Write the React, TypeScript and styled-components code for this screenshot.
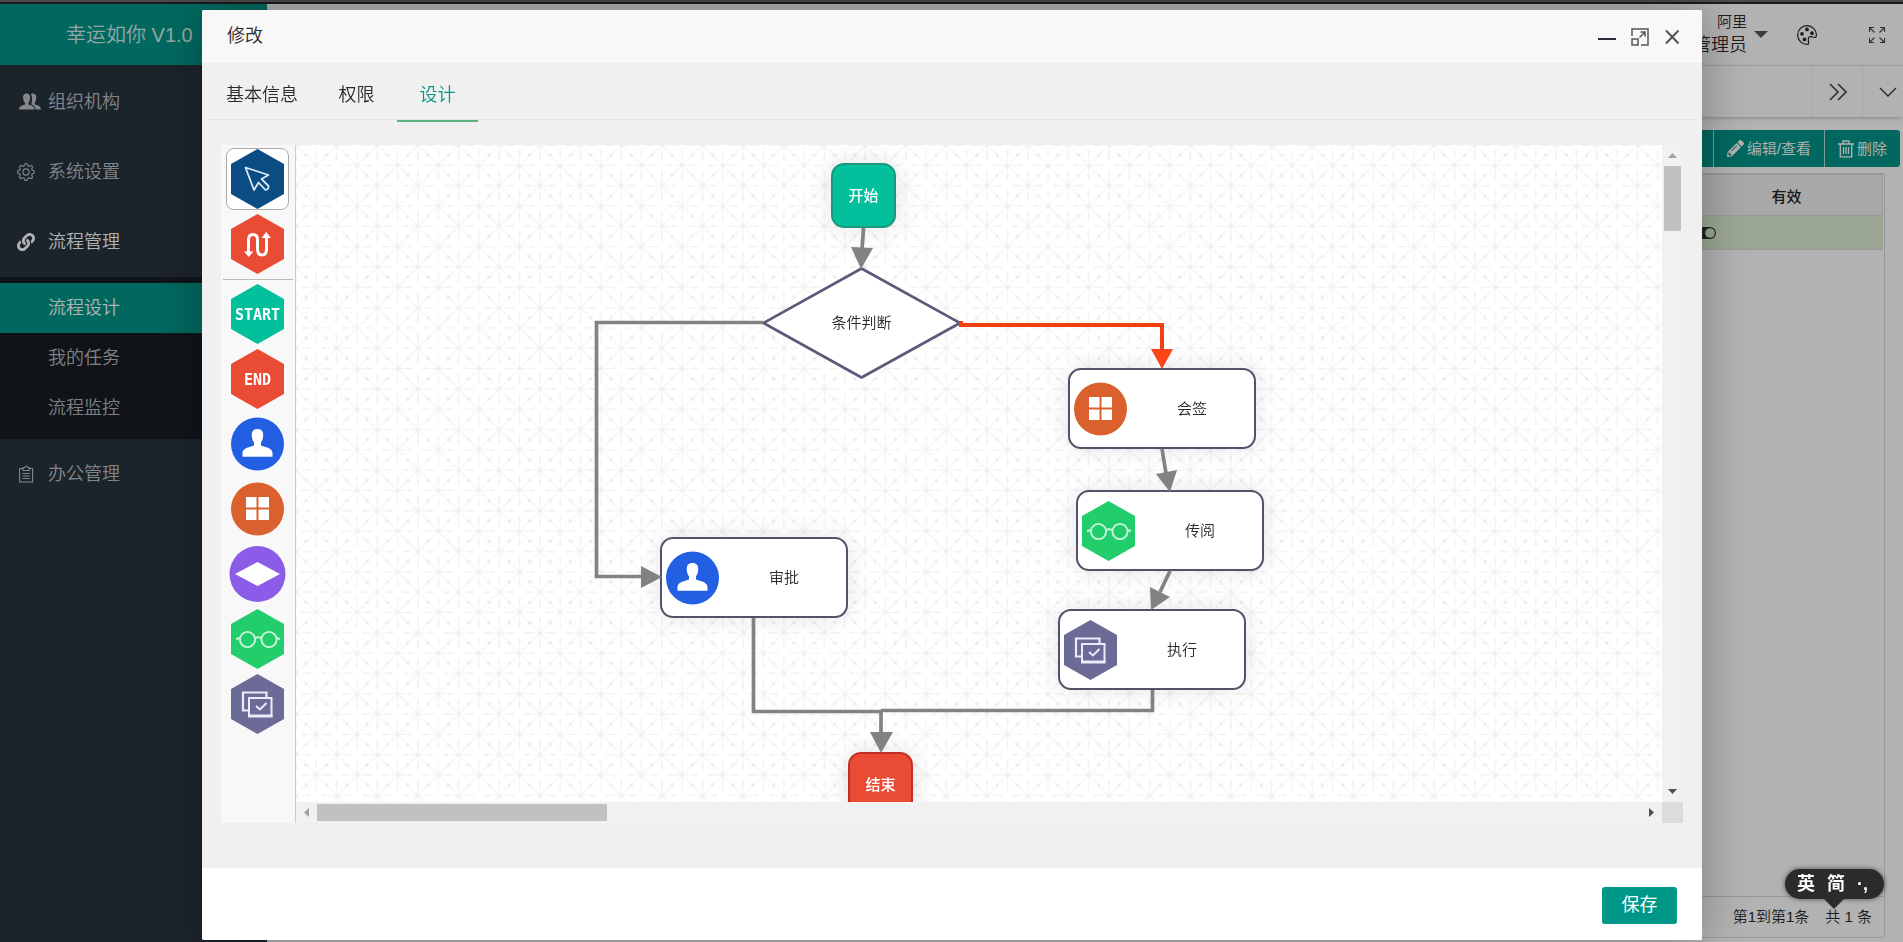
import React from 'react';
import styled, { createGlobalStyle, css } from 'styled-components';
import { BsGear, BsPalette } from 'react-icons/bs';
import { FaLink, FaPencilAlt } from 'react-icons/fa';

const GlobalStyle = createGlobalStyle`
  * { box-sizing: border-box; }
  html, body, #root { height: 100%; }
  body {
    margin: 0;
    overflow: hidden;
    background: #fff;
    color: #2a2a2a;
    font: 350 15px/20px "Liberation Sans", "Noto Sans CJK SC", sans-serif;
  }
  button {
    margin: 0;
    padding: 0;
    border: 0;
    background: none;
    color: inherit;
    font: inherit;
    cursor: pointer;
  }
  a { color: inherit; text-decoration: none; }
  svg { display: block; flex: none; }
`;

/* ---------- application shell ---------- */

const Shell = styled.div`
  display: flex;
  flex-direction: column;
  height: 100%;
`;

const BrowserEdge = styled.div`
  flex: none;
  height: 4px;
  background: #6a6a6c;
  border-bottom: 2px solid #27272a;
`;

const Columns = styled.div`
  flex: 1;
  display: flex;
  min-height: 0;
`;

const Sidebar = styled.aside`
  flex: none;
  width: 267px;
  background: #28333e;
  color: rgba(255, 255, 255, 0.7);
  font-size: 18px;
`;

const Logo = styled.div`
  height: 61px;
  margin-bottom: 2px;
  padding-left: 66px;
  background: #009688;
  color: rgba(255, 255, 255, 0.85);
  font-size: 20px;
  line-height: 63px;
`;

const MenuItem = styled.a<{ $open?: boolean }>`
  display: flex;
  align-items: center;
  height: 70px;
  padding-left: 17px;
  color: ${p => (p.$open ? '#fff' : 'inherit')};
`;

const MenuIcon = styled.span`
  flex: none;
  width: 31px;
`;

const SubMenu = styled.nav`
  padding: 6px 0;
  background: rgba(0, 0, 0, 0.4);
`;

const SubItem = styled.a<{ $active?: boolean }>`
  display: block;
  padding-left: 48px;
  line-height: 50px;
  ${p => p.$active && css`
    background: #009688;
    color: #fff;
  `}
`;

const Main = styled.main`
  flex: 1;
  min-width: 0;
  display: flex;
  flex-direction: column;
`;

const TopBar = styled.header`
  flex: none;
  display: flex;
  justify-content: flex-end;
  align-items: center;
  height: 62px;
  padding-right: 17px;
  border-bottom: 1px solid #f0f0f0;
`;

const UserMenu = styled.button`
  display: flex;
  align-items: center;
  gap: 7px;
  margin-right: 29px;
`;

const UserName = styled.span`
  display: flex;
  flex-direction: column;
  align-items: flex-end;
  gap: 3px;
  padding-bottom: 3px;
`;

const Role = styled.span`
  font-size: 18px;
`;

const IconButton = styled.button`
  display: flex;
  align-items: center;
  justify-content: center;
`;

const Palette = styled(IconButton)`
  margin-right: 51px;
`;

const TabStrip = styled.div`
  flex: none;
  display: flex;
  justify-content: flex-end;
  height: 51px;
  box-shadow: 0 1px 4px rgba(0, 0, 0, 0.25);
`;

const StripButton = styled(IconButton)`
  width: 50px;
  border-left: 1px solid #f0f0f0;
`;

const LastStripButton = styled(StripButton)`
  width: 41px;
  padding-left: 10px;
`;

const Page = styled.section`
  flex: 1;
  display: flex;
  flex-direction: column;
  align-items: stretch;
  min-height: 0;
  padding: 13px 3px 4px 15px;
`;

const ActionGroup = styled.div`
  display: flex;
  align-self: flex-end;
  overflow: hidden;
  border-radius: 3px;
`;

const Action = styled.button`
  display: flex;
  align-items: center;
  gap: 3px;
  height: 37px;
  padding: 0 13px;
  background: #009688;
  color: #fff;
  & + & { border-left: 1px solid rgba(255, 255, 255, 0.7); }
`;

const GridBox = styled.div`
  flex: 1;
  display: flex;
  flex-direction: column;
  margin: 6px 15px 0 0;
  border: 1px solid #dcdcdc;
  border-radius: 2px;
`;

const Grid = styled.table`
  width: calc(100% - 1px);
  border-collapse: collapse;
  table-layout: fixed;
`;

const HeadCell = styled.th`
  height: 41px;
  padding: 4px 4px 0 0;
  border: 1px solid #dcdcdc;
  background: #f2f2f2;
  font-weight: 500;
  color: #222;
`;

const Cell = styled.td`
  height: 34px;
  padding: 0 0 0 1px;
  border-bottom: 1px solid #dcdcdc;
  background: #dff0d3;
`;

const Pager = styled.div`
  display: flex;
  justify-content: flex-end;
  align-items: center;
  gap: 16px;
  height: 41px;
  margin-top: auto;
  padding-right: 12px;
  border-top: 1px solid #d8d8d8;
`;

/* ---------- dialog ---------- */

const Mask = styled.div`
  position: fixed;
  inset: 0;
  display: flex;
  padding: 10px 201px 2px 202px;
  background: rgba(0, 0, 0, 0.3);
`;

const Dialog = styled.div`
  flex: 1;
  display: flex;
  flex-direction: column;
  min-width: 0;
  overflow: hidden;
  border-radius: 2px;
  background: #f0f0f0;
  box-shadow: 1px 1px 50px rgba(0, 0, 0, 0.3);
`;

const DialogHeader = styled.header`
  flex: none;
  display: flex;
  align-items: center;
  gap: 15px;
  height: 54px;
  padding: 1px 22px 0 25px;
  border-bottom: 1px solid #eee;
  background: #f8f8f8;
`;

const DialogTitle = styled.h1`
  flex: 1;
  margin: 0 0 3px;
  font-size: 18px;
  font-weight: 350;
`;

const DialogTabs = styled.div`
  flex: none;
  display: flex;
  height: 56px;
  margin: 0 6px;
  border-bottom: 1px solid #e2e2e2;
`;

const DialogTab = styled.button<{ $active?: boolean }>`
  min-width: 81px;
  height: 58px;
  padding: 6px 18px 0;
  border-bottom: 2px solid ${p => (p.$active ? '#5fb27e' : 'transparent')};
  color: ${p => (p.$active ? '#009688' : 'inherit')};
  font-size: 18px;
`;

const Workspace = styled.div`
  flex: 1;
  display: flex;
  min-height: 0;
  margin: 25px 19px 45px 19px;
`;

const Tools = styled.div`
  flex: none;
  display: flex;
  flex-direction: column;
  align-items: center;
  gap: 3px;
  width: 75px;
  padding: 3px 1px 0 0;
  border-right: 1px solid #ccc;
  background: #f8f8f8;
`;

const Tool = styled.button<{ $selected?: boolean }>`
  flex: none;
  display: flex;
  align-items: center;
  justify-content: center;
  width: 63px;
  height: 62px;
  border: 1px solid ${p => (p.$selected ? '#aaa' : 'transparent')};
  border-radius: 8px;
  background: ${p => (p.$selected ? '#fff' : 'none')};
`;

const Divider = styled.hr`
  flex: none;
  align-self: stretch;
  height: 1px;
  margin: 1px 1px 0 2px;
  border: 0;
  background: #bbb;
`;

const Viewport = styled.div`
  flex: 1;
  display: grid;
  grid-template: minmax(0, 1fr) 21px / minmax(0, 1fr) 21px;
  min-width: 0;
`;

const Canvas = styled.div`
  position: relative;
  overflow: hidden;
  background: #fff;
`;

const Layer = styled.svg`
  position: absolute;
  inset: 0;
  width: 100%;
  height: 100%;
`;

const ScrollTrack = styled.div<{ $vertical?: boolean }>`
  display: flex;
  flex-direction: ${p => (p.$vertical ? 'column' : 'row')};
  align-items: center;
  background: #f1f1f1;
`;

const ScrollButton = styled(IconButton)`
  width: 21px;
  height: 21px;
  color: #505050;
  &:disabled { color: #a3a3a3; }
`;

const Thumb = styled.div<{ $w: string; $h: string }>`
  width: ${p => p.$w};
  height: ${p => p.$h};
  background: #c1c1c1;
`;

const Spacer = styled.div`
  flex: 1;
`;

const Corner = styled.div`
  background: #dcdcdc;
`;

interface Place { $x: number; $y: number }

const Node = styled.div<Place>`
  position: absolute;
  left: ${p => p.$x}px;
  top: ${p => p.$y}px;
  display: flex;
  align-items: center;
  width: 188px;
  height: 81px;
  padding-left: 4px;
  border: 2px solid #555168;
  border-radius: 13px;
  background: #fff;
  box-shadow: 0 0 24px rgba(0, 0, 0, 0.1);
`;

const NodeText = styled.span`
  flex: 1;
  padding-left: 3px;
  text-align: center;
`;

const Terminal = styled.div<Place & { $end?: boolean }>`
  position: absolute;
  left: ${p => p.$x}px;
  top: ${p => p.$y}px;
  width: 65px;
  height: 65px;
  border: 2px solid ${p => (p.$end ? '#bf2f24' : '#17987f')};
  border-radius: 13px;
  background: ${p => (p.$end ? '#ea4b35' : '#02c09c')};
  box-shadow: 0 0 24px rgba(0, 0, 0, 0.12);
  color: #fff;
  font-weight: 500;
  line-height: 61px;
  text-align: center;
`;

const Decision = styled.div<Place>`
  position: absolute;
  left: ${p => p.$x}px;
  top: ${p => p.$y}px;
  display: grid;
  place-items: center;
  width: 199px;
  height: 112px;
  & > * { grid-area: 1 / 1; }
`;

const DialogFooter = styled.footer`
  flex: none;
  display: flex;
  justify-content: flex-end;
  align-items: center;
  height: 72px;
  padding: 2px 25px 0 0;
  background: #fff;
`;

const SaveButton = styled.button`
  width: 75px;
  height: 37px;
  border-radius: 3px;
  background: #009688;
  color: #fff;
  font-size: 18px;
  font-weight: 400;
`;

/* ---------- input method bubble ---------- */

const Ime = styled.div`
  position: fixed;
  right: 19px;
  bottom: 43px;
  display: flex;
  align-items: center;
  gap: 12px;
  width: 99px;
  height: 30px;
  padding-left: 12px;
  border-radius: 15px;
  background: #2b2b2b;
  box-shadow: 0 0 5px rgba(0, 0, 0, 0.6);
  color: #fff;
  font-size: 18px;
  font-weight: 700;
  &::after {
    content: '';
    position: absolute;
    left: 39px;
    top: 30px;
    border: 10px solid transparent;
    border-top-color: #2b2b2b;
    border-bottom: 0;
  }
`;

/* ---------- drawings ---------- */

const HEX = '26.5,0 53,15 53,45 26.5,60 0,45 0,15';

const Hexagon = ({ fill, children }: { fill: string; children: React.ReactNode }) => (
  <svg width="53" height="60" viewBox="0 0 53 60">
    <polygon points={HEX} fill={fill} />
    {children}
  </svg>
);

const Disc = ({ fill, r = 26.5, children }: { fill: string; r?: number; children: React.ReactNode }) => (
  <svg width="53" height="60" viewBox="0 0 53 60" overflow="visible">
    <circle cx="26.5" cy="30" r={r} fill={fill} />
    {children}
  </svg>
);

const CursorIcon = () => (
  <Hexagon fill="#0b4c82">
    <path d="M14.5 18.5 L37.5 26 L30.5 30 L37.5 37 Q38 40 34.5 41 L27.5 33.5 L23 41 Z" fill="none" stroke="#dcebf8" strokeWidth="1.8" strokeLinejoin="round" />
  </Hexagon>
);

const RouteIcon = () => (
  <Hexagon fill="#ea4b35">
    <path d="M17.5 39 V26 Q17.5 20.5 22 20.5 Q26.5 20.5 26.5 26 V35 Q26.5 41 31 41 Q35.5 41 35.5 35 V22" fill="none" stroke="#fff" strokeWidth="3" />
    <path d="M13 37.5 H22.5 L17.7 43 Z M30.5 24 H40 L35.3 18 Z" fill="#fff" />
  </Hexagon>
);

const WordText = styled.text`
  fill: #fff;
  font: 700 15px "DejaVu Sans Mono", monospace;
  text-anchor: middle;
`;

const UserIcon = () => (
  <Disc fill="#225fe2">
    <path d="M26.5 15 C31 15 32.5 18 32.2 22 C31.900 25.5 31 27 30 28.5 V31.5 C36 33.5 41.5 34.5 41.5 39 V42.7 H11.5 V39 C11.5 34.5 17 33.5 23 31.5 V28.5 C22 27 21 25.5 20.8 22 C20.5 18 22 15 26.5 15 Z" fill="#fff" />
  </Disc>
);

const GridIcon = () => (
  <Disc fill="#da602d">
    <path d="M15 18 h10.5 v10.5 h-10.5z M27.5 18 h10.5 v10.5 h-10.5z M15 30.5 h10.5 v10.5 h-10.5z M27.5 30.5 h10.5 v10.5 h-10.5z" fill="#fff" />
  </Disc>
);

const BranchIcon = () => (
  <Disc fill="#8a5ce8" r={28}>
    <polygon points="4,30 26.5,18 49,30 26.5,42" fill="#fff" />
  </Disc>
);

const GlassesIcon = () => (
  <Hexagon fill="#22cd6c">
    <g fill="none" stroke="#c8f6da" strokeWidth="1.9">
      <circle cx="16.5" cy="30.5" r="7.6" />
      <circle cx="38" cy="30.5" r="7.6" />
      <path d="M24 29 Q27 27.5 30.5 29 M5 30 L9 29 M49 30 L45.5 29" />
    </g>
  </Hexagon>
);

const TaskIcon = () => (
  <Hexagon fill="#6c6a97">
    <path d="M17 36.5 H12 V18.5 H35.5 V23" fill="none" stroke="#ecebfa" strokeWidth="2.2" />
    <rect x="18" y="24" width="22.5" height="18" fill="none" stroke="#ecebfa" strokeWidth="2" />
    <path d="M17 42 H41.5" stroke="#ecebfa" strokeWidth="3" />
    <path d="M25 32 L29 35.5 L35.5 29" fill="none" stroke="#ecebfa" strokeWidth="2" />
  </Hexagon>
);

const PeopleIcon = () => (
  <svg width="26" height="20" viewBox="0 0 26 20" fill="currentColor">
    <path d="M9.5 1.5 C12.5 1.5 13.5 4 13 7 C12.7 9 12 10 11.5 10.8 V12.5 C14.5 13.5 17.5 14 17.5 17.5 H2 C2 14 5 13.5 8 12.5 V10.8 C7 10 6.5 9 6.2 7 C5.8 4 6.5 1.5 9.5 1.5 Z" />
    <path d="M15.5 1.5 C18.8 1.5 19.5 4 19.2 7 C19 9 18.2 10 17.8 10.8 V12.5 C20.8 13.5 24 14 24 17.5 H18.5 C18.5 14.5 16.5 13.2 14.2 12.2 C15 10.5 15.7 5 13.8 2 Z" />
  </svg>
);

const ClipboardIcon = () => (
  <svg width="20" height="20" viewBox="0 0 20 20" fill="none" stroke="currentColor" strokeWidth="1.1">
    <path d="M6 4.5 H2.6 V18 H15.6 V4.5 H12.2 M6 6.5 V3.5 H7.6 Q9 0.5 10.6 3.5 H12.2 V6.5 Z M5.5 9.5 H12.8 M5.5 12 H12.8 M5.5 14.5 H12.8" />
  </svg>
);

const TrashIcon = () => (
  <svg width="16" height="18" viewBox="0 0 16 18" fill="none" stroke="currentColor" strokeWidth="1.3">
    <path d="M0 4 H16 M5 4 V1 H11 V4 M2.3 4 V16.8 H13.7 V4 M5.5 7 V14 M8 7 V14 M10.5 7 V14" />
  </svg>
);

const ExpandIcon = () => (
  <svg width="18" height="18" viewBox="0 0 18 18" fill="none" stroke="#444" strokeWidth="1.1">
    <path d="M1.5 6 V1.5 H6 M1.5 1.5 L6.5 6.5 M12 1.5 H16.5 V6 M16.5 1.5 L11.5 6.5 M1.5 12 V16.5 H6 M1.5 16.5 L6.5 11.5 M12 16.5 H16.5 V12 M16.5 16.5 L11.5 11.5" />
  </svg>
);

const ToggleIcon = () => (
  <svg width="20" height="12" viewBox="0 0 20 12">
    <rect width="20" height="12" rx="6" fill="#333" />
    <circle cx="14" cy="6" r="4.8" fill="#dff0d3" />
  </svg>
);

const Arrow = ({ points }: { points: string }) => (
  <svg width="9" height="9" viewBox="0 0 9 9"><polygon points={points} fill="currentColor" /></svg>
);

const CELL = 40.65;
const HALF = CELL / 2;

const Star = ({ x, y }: { x: number; y: number }) => (
  <g transform={`translate(${x} ${y})`}>
    <path d="M-15 0 H15 M0 -15 V15" stroke="#f4f4f4" strokeWidth="1.2" />
    <path d="M-10 -10 L10 10 M-10 10 L10 -10" stroke="#f3f3f3" strokeWidth="1" />
    <path d="M-15 0 H-10 M15 0 H10 M0 -15 V-10 M0 15 V10" stroke="#efefef" strokeWidth="1.3" />
    <circle r="2" fill="#efefef" />
  </g>
);

const Backdrop = () => (
  <Layer aria-hidden="true">
    <defs>
      <pattern id="stars" width={CELL} height={CELL} patternUnits="userSpaceOnUse">
        {[[0, 0], [CELL, 0], [0, CELL], [CELL, CELL], [HALF, HALF]].map(([x, y]) => (
          <Star key={`${x}-${y}`} x={x} y={y} />
        ))}
        {[[1, 1], [3, 1], [1, 3], [3, 3]].map(([x, y]) => (
          <circle key={`${x}${y}`} cx={(CELL * x) / 4} cy={(CELL * y) / 4} r="1.7" fill="#ececec" />
        ))}
      </pattern>
    </defs>
    <rect width="100%" height="100%" fill="url(#stars)" />
  </Layer>
);

const Links = () => (
  <Layer aria-hidden="true">
    <g fill="none" stroke="#828282" strokeWidth="3.7">
      <path d="M567.5 83 L566 104" />
      <path d="M467 177.5 H300.5 V431.5 H346" />
      <path d="M866 304 L870 328" />
      <path d="M874 426 L864 447" />
      <path d="M457.5 473 V566.5 H585 V588" />
      <path d="M856.5 545 V565.5 H585" />
    </g>
    <g fill="#828282">
      <polygon points="555,102 577,103 565,124" />
      <polygon points="345,421 345,443 366,432" />
      <polygon points="860,329 881,325 874,347" />
      <polygon points="854,442 874,452 855,465" />
      <polygon points="574,587 597,587 585,608" />
    </g>
    <path d="M663 180 H866 V205" fill="none" stroke="#f03f10" strokeWidth="4" />
    <rect x="663" y="176" width="4" height="6" fill="#f03f10" />
    <polygon points="855,204 877,204 866,224" fill="#fc4416" />
  </Layer>
);

/* ---------- page ---------- */

export default function App() {
  return (
    <>
      <GlobalStyle />
      <Shell>
        <BrowserEdge />
        <Columns>
          <Sidebar>
            <Logo>幸运如你 V1.0</Logo>
            <MenuItem href="#org"><MenuIcon><PeopleIcon /></MenuIcon>组织机构</MenuItem>
            <MenuItem href="#system"><MenuIcon><BsGear size={18} /></MenuIcon>系统设置</MenuItem>
            <MenuItem href="#flow" $open><MenuIcon><FaLink size={18} /></MenuIcon>流程管理</MenuItem>
            <SubMenu>
              <SubItem href="#design" $active>流程设计</SubItem>
              <SubItem href="#tasks">我的任务</SubItem>
              <SubItem href="#monitor">流程监控</SubItem>
            </SubMenu>
            <MenuItem href="#office"><MenuIcon><ClipboardIcon /></MenuIcon>办公管理</MenuItem>
          </Sidebar>
          <Main>
            <TopBar>
              <UserMenu>
                <UserName>
                  <span>阿里</span>
                  <Role>管理员</Role>
                </UserName>
                <svg width="14" height="7" viewBox="0 0 14 7"><polygon points="0,0 14,0 7,7" fill="#555" /></svg>
              </UserMenu>
              <Palette aria-label="主题"><BsPalette size={20} /></Palette>
              <IconButton aria-label="全屏"><ExpandIcon /></IconButton>
            </TopBar>
            <TabStrip>
              <StripButton aria-label="向右">
                <svg width="18" height="18" viewBox="0 0 18 18" fill="none" stroke="#444" strokeWidth="1.6">
                  <path d="M1 1 L9 9 L1 17 M9 1 L17 9 L9 17" />
                </svg>
              </StripButton>
              <LastStripButton aria-label="更多">
                <svg width="18" height="10" viewBox="0 0 18 10" fill="none" stroke="#444" strokeWidth="1.5">
                  <path d="M1 1 L9 9 L17 1" />
                </svg>
              </LastStripButton>
            </TabStrip>
            <Page>
              <ActionGroup>
                <Action>新增</Action>
                <Action><FaPencilAlt size={17} />编辑/查看</Action>
                <Action><TrashIcon />删除</Action>
              </ActionGroup>
              <GridBox>
                <Grid>
                  <colgroup><col /><col width="188" /></colgroup>
                  <thead><tr><HeadCell /><HeadCell>有效</HeadCell></tr></thead>
                  <tbody><tr><Cell /><Cell><ToggleIcon /></Cell></tr></tbody>
                </Grid>
                <Pager><span>第1到第1条</span><span>共 1 条</span></Pager>
              </GridBox>
            </Page>
          </Main>
        </Columns>
      </Shell>

      <Mask>
        <Dialog role="dialog" aria-labelledby="dialog-title">
          <DialogHeader>
            <DialogTitle id="dialog-title">修改</DialogTitle>
            <IconButton aria-label="最小化">
              <svg width="18" height="18" viewBox="0 0 18 18"><rect y="10" width="18" height="2" fill="#2e2d3c" /></svg>
            </IconButton>
            <IconButton aria-label="最大化">
              <svg width="18" height="18" viewBox="0 0 18 18" fill="none" stroke="#555" strokeWidth="1.5">
                <path d="M1 8 V1 H17 V17 H10 M1 11 H7 V17 H1 Z M8.5 9.5 L13.5 4.5 M9.5 4 H14 V8.5" />
              </svg>
            </IconButton>
            <IconButton aria-label="关闭">
              <svg width="16" height="16" viewBox="0 0 16 16" stroke="#555" strokeWidth="2">
                <path d="M2 1.5 L14.5 14.5 M14.5 1.5 L2 14.5" />
              </svg>
            </IconButton>
          </DialogHeader>
          <DialogTabs>
            <DialogTab>基本信息</DialogTab>
            <DialogTab>权限</DialogTab>
            <DialogTab $active>设计</DialogTab>
          </DialogTabs>
          <Workspace>
            <Tools>
              <Tool $selected aria-label="选择"><CursorIcon /></Tool>
              <Tool aria-label="连线"><RouteIcon /></Tool>
              <Divider />
              <Tool><Hexagon fill="#02c09c"><WordText x="26.5" y="36">START</WordText></Hexagon></Tool>
              <Tool><Hexagon fill="#ea4b35"><WordText x="26.5" y="36">END</WordText></Hexagon></Tool>
              <Tool aria-label="审批"><UserIcon /></Tool>
              <Tool aria-label="会签"><GridIcon /></Tool>
              <Tool aria-label="条件判断"><BranchIcon /></Tool>
              <Tool aria-label="传阅"><GlassesIcon /></Tool>
              <Tool aria-label="执行"><TaskIcon /></Tool>
            </Tools>
            <Viewport>
              <Canvas>
                <Backdrop />
                <Terminal $x={535} $y={18}>开始</Terminal>
                <Terminal $x={552} $y={607} $end>结束</Terminal>
                <Decision $x={466} $y={122}>
                  <svg width="199" height="112" viewBox="0 0 199 112">
                    <polygon points="1.5,56 99.5,1.5 198,56 99.5,110.5" fill="#fff" stroke="#5d5a78" strokeWidth="2.6" strokeLinejoin="round" />
                  </svg>
                  <span>条件判断</span>
                </Decision>
                <Node $x={772} $y={223}><GridIcon /><NodeText>会签</NodeText></Node>
                <Node $x={780} $y={345}><GlassesIcon /><NodeText>传阅</NodeText></Node>
                <Node $x={762} $y={464}><TaskIcon /><NodeText>执行</NodeText></Node>
                <Node $x={364} $y={392}><UserIcon /><NodeText>审批</NodeText></Node>
                <Links />
              </Canvas>
              <ScrollTrack $vertical>
                <ScrollButton disabled aria-label="向上滚动"><Arrow points="0,7 9,7 4.5,2" /></ScrollButton>
                <Thumb $w="17px" $h="65px" />
                <Spacer />
                <ScrollButton aria-label="向下滚动"><Arrow points="0,2 9,2 4.5,7" /></ScrollButton>
              </ScrollTrack>
              <ScrollTrack>
                <ScrollButton disabled aria-label="向左滚动"><Arrow points="7,0 7,9 2,4.5" /></ScrollButton>
                <Thumb $w="290px" $h="17px" />
                <Spacer />
                <ScrollButton aria-label="向右滚动"><Arrow points="2,0 2,9 7,4.5" /></ScrollButton>
              </ScrollTrack>
              <Corner />
            </Viewport>
          </Workspace>
          <DialogFooter><SaveButton>保存</SaveButton></DialogFooter>
        </Dialog>
      </Mask>

      <Ime><span>英</span><span>简</span><span>·,</span></Ime>
    </>
  );
}
